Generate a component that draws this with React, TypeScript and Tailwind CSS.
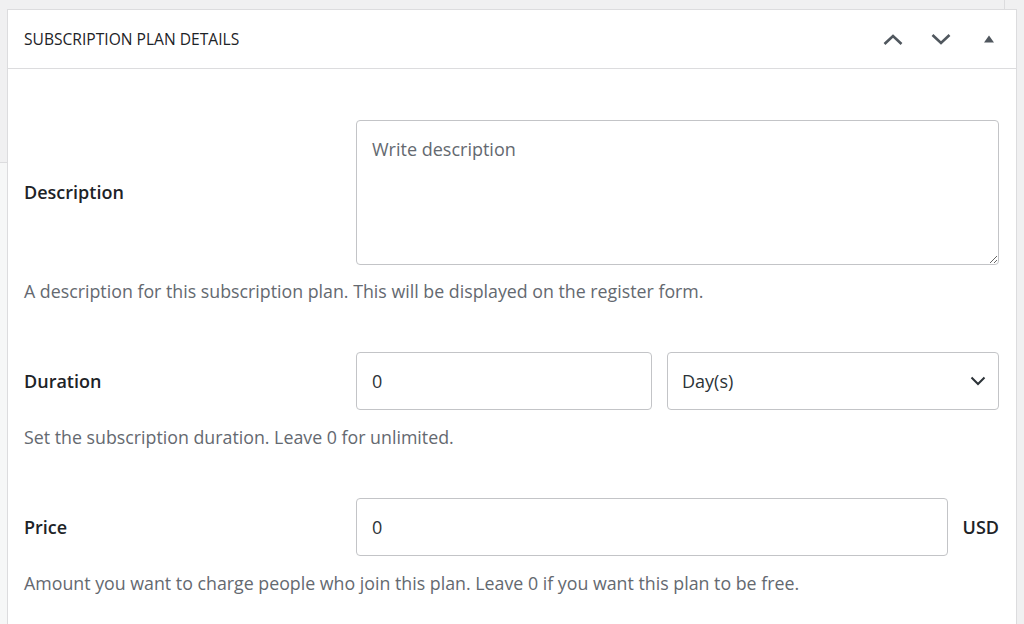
import React from "react";

const font = { fontFamily: '"Open Sans", "Noto Sans", Arial, sans-serif' };

function Row({
  label,
  help,
  children,
  first,
}: {
  label: string;
  help: string;
  children: React.ReactNode;
  first?: boolean;
}) {
  return (
    <div className={first ? "pt-[51px]" : "pt-[49px]"}>
      <div className="flex items-center">
        <div className="w-[332px] shrink-0 text-[18px] font-semibold text-[#1d2327]">{label}</div>
        <div className="flex-1 flex items-center">{children}</div>
      </div>
      <div className={`${first ? "mt-[14px]" : "mt-[15px]"} text-[17.8px] leading-[24px] text-[#646970]`}>{help}</div>
    </div>
  );
}

export default function App() {
  return (
    <div className="w-[1024px] h-[624px] bg-[#f0f0f1] overflow-hidden flex flex-col" style={font}>
      <div className="h-[9px] flex shrink-0">
        <div className="flex-1" />
        <div className="w-px bg-[#dcdcde]" />
        <div className="w-[19px]" />
      </div>
      <div className="flex flex-1 min-h-0">
        <div className="w-[7px] shrink-0 flex flex-col">
          <div className="h-[153px]" />
          <div className="h-px bg-[#dcdcde]" />
          <div className="flex-1 bg-[#f6f7f7]" />
        </div>
        <div className="w-[1010px] shrink-0 bg-white border-l border-t border-r border-[#dcdcde] flex flex-col">
          <div className="h-[59px] shrink-0 border-b border-[#dcdcde] flex items-center pl-[16px] pr-[17px]">
            <div className="flex-1 pt-[2px] text-[15.6px] font-normal text-[#1d2327]">SUBSCRIPTION PLAN DETAILS</div>
            <div className="flex items-center gap-[28px]">
              <svg width="20" height="11" viewBox="0 0 20 11" className="text-[#50575e]">
                <path d="M1.5 10 L10 2 L18.5 10" fill="none" stroke="currentColor" strokeWidth="2.6" />
              </svg>
              <svg width="20" height="11" viewBox="0 0 20 11" className="text-[#50575e]">
                <path d="M1.5 1 L10 9 L18.5 1" fill="none" stroke="currentColor" strokeWidth="2.6" />
              </svg>
              <svg width="20" height="10" viewBox="0 0 20 10" className="text-[#50575e]">
                <path d="M5 8.5 L10 1.5 L15 8.5 Z" fill="currentColor" />
              </svg>
            </div>
          </div>
          <div className="pl-[16px] pr-[17px]">
            <Row
              first
              label="Description"
              help="A description for this subscription plan. This will be displayed on the register form."
            >
              <textarea
                placeholder="Write description"
                className="w-full h-[145px] border border-[#c3c4c7] rounded-[4px] px-[15px] pt-[16px] text-[18px] leading-[24px] text-[#2c3338] placeholder:text-[#646970] outline-none resize-y"
                style={font}
              />
            </Row>
            <Row label="Duration" help="Set the subscription duration. Leave 0 for unlimited.">
              <div className="w-[296px] h-[58px] border border-[#c3c4c7] rounded-[4px] px-[15px] flex items-center text-[18px] text-[#2c3338]">
                0
              </div>
              <div className="ml-[15px] flex-1 h-[58px] border border-[#c3c4c7] rounded-[4px] pl-[14px] pr-[12px] flex items-center text-[18px] text-[#2c3338]">
                <span className="flex-1">Day(s)</span>
                <svg width="16" height="10" viewBox="0 0 16 10" className="text-[#2c3338]">
                  <path d="M1.5 1.5 L8 8 L14.5 1.5" fill="none" stroke="currentColor" strokeWidth="2" />
                </svg>
              </div>
            </Row>
            <Row
              label="Price"
              help="Amount you want to charge people who join this plan. Leave 0 if you want this plan to be free."
            >
              <div className="flex-1 h-[58px] border border-[#c3c4c7] rounded-[4px] px-[15px] flex items-center text-[18px] text-[#2c3338]">
                0
              </div>
              <div className="ml-[15px] text-[18px] font-semibold text-[#1d2327]">USD</div>
            </Row>
          </div>
        </div>
        <div className="flex-1" />
      </div>
    </div>
  );
}
